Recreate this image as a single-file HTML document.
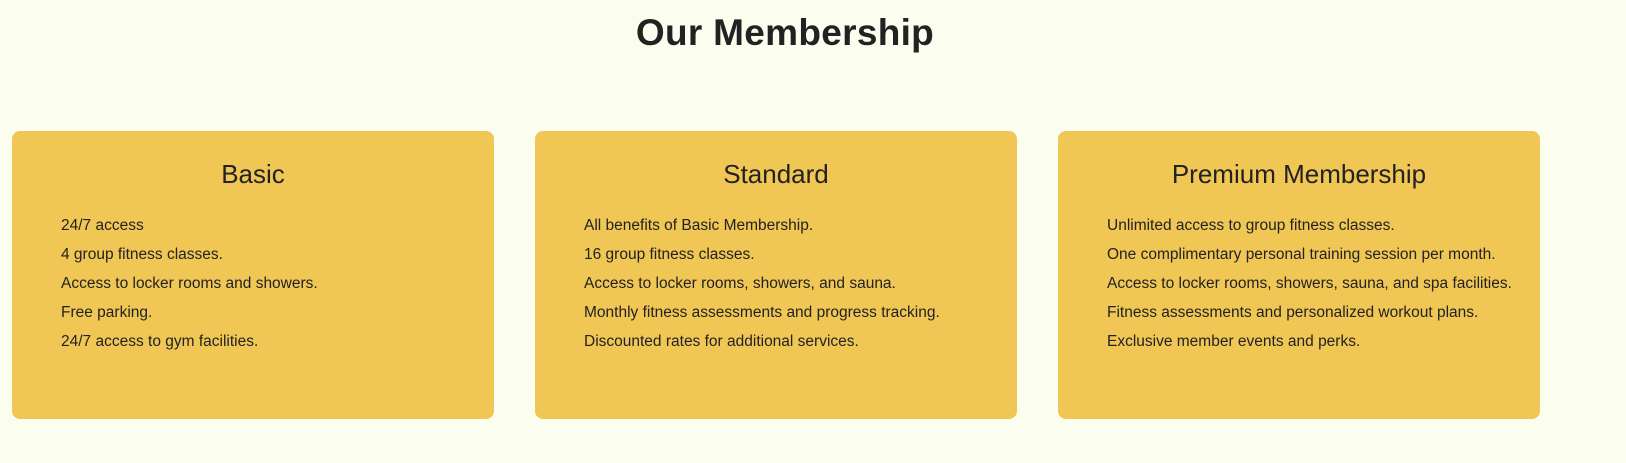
<!DOCTYPE html>
<html><head><meta charset="utf-8"><style>
*{margin:0;padding:0;box-sizing:border-box}
body{width:1626px;height:463px;background:#fbfdef;font-family:"Liberation Sans",sans-serif;color:#222;position:relative;overflow:hidden}
h1{position:absolute;top:12px;left:0;width:1570px;text-align:center;font-size:37px;font-weight:bold;letter-spacing:0.3px}
.card{position:absolute;top:131px;width:482px;height:288px;background:#f0c654;border-radius:8px}
.t{text-align:center;font-size:26px;font-weight:normal;margin-top:28px;height:30px;line-height:30px}
ul{list-style:none;margin-top:22px;padding-left:49px;font-size:15.5px;line-height:29px}
</style></head><body>
<h1>Our Membership</h1>
<div class="card" style="left:12px"><div class="t">Basic</div><ul>
<li>24/7 access</li><li>4 group fitness classes.</li><li>Access to locker rooms and showers.</li><li>Free parking.</li><li>24/7 access to gym facilities.</li></ul></div>
<div class="card" style="left:535px"><div class="t">Standard</div><ul>
<li>All benefits of Basic Membership.</li><li>16 group fitness classes.</li><li>Access to locker rooms, showers, and sauna.</li><li>Monthly fitness assessments and progress tracking.</li><li>Discounted rates for additional services.</li></ul></div>
<div class="card" style="left:1058px"><div class="t">Premium Membership</div><ul>
<li>Unlimited access to group fitness classes.</li><li>One complimentary personal training session per month.</li><li>Access to locker rooms, showers, sauna, and spa facilities.</li><li>Fitness assessments and personalized workout plans.</li><li>Exclusive member events and perks.</li></ul></div>
</body></html>
